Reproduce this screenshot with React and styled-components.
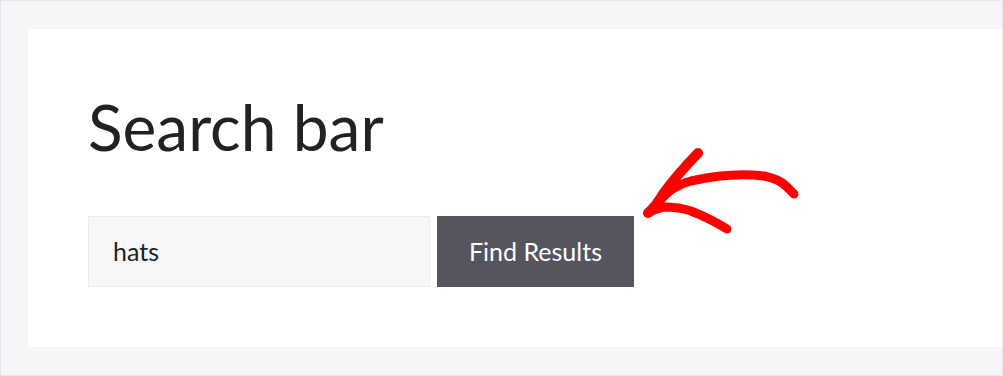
import React from 'react'
import styled, { createGlobalStyle } from 'styled-components'

const Global = createGlobalStyle`
  html, body {
    margin: 0;
    padding: 0;
    background: #ffffff;
  }
  * {
    box-sizing: border-box;
  }
`

const Frame = styled.div`
  position: relative;
  width: 1003px;
  height: 376px;
  border: 1px solid #e6e7ea;
  background: #f5f6f8;
  padding: 28px 0 28px 27px;
  font-family: Lato, 'Open Sans', sans-serif;
`

const Panel = styled.section`
  height: 318px;
  background: #ffffff;
  padding: 60px 0 0 60px;
`

const Title = styled.h1`
  margin: 0 0 50px 0;
  font-size: 64px;
  font-weight: 400;
  line-height: 1.2;
  color: #222222;
`

const SearchRow = styled.form`
  display: flex;
  gap: 7px;
`

const SearchInput = styled.input`
  width: 342px;
  height: 71px;
  padding: 0 24px;
  border: 1px solid #eaebed;
  background: #f6f7f9;
  font-family: inherit;
  font-size: 25px;
  color: #222222;
  outline: none;
`

const SubmitButton = styled.button`
  width: 197px;
  height: 71px;
  border: none;
  background: #55555f;
  color: #ffffff;
  font-family: inherit;
  font-size: 25px;
  cursor: pointer;
`

const Arrow = styled.svg`
  position: absolute;
  left: 630px;
  top: 140px;
  width: 180px;
  height: 100px;
`

export default function App() {
  return (
    <>
      <Global />
      <Frame>
        <Panel>
          <Title>Search bar</Title>
          <SearchRow onSubmit={(e) => e.preventDefault()}>
            <SearchInput defaultValue="hats" />
            <SubmitButton type="submit">Find Results</SubmitButton>
          </SearchRow>
        </Panel>
        <Arrow viewBox="0 0 180 100">
          <g fill="none" stroke="#ff0000" strokeLinecap="round" strokeLinejoin="round">
            <path strokeWidth="10" d="M67,12 Q45,35 32,53 Q25,65 17,72" />
            <path strokeWidth="9" d="M17,72 Q25,68 33,66 Q48,66 60,70 Q80,78 96,88" />
            <path strokeWidth="9" d="M27,62 Q40,45 60,40 Q100,31 133,35 Q148,38 155,45 L163,53" />
          </g>
        </Arrow>
      </Frame>
    </>
  )
}
